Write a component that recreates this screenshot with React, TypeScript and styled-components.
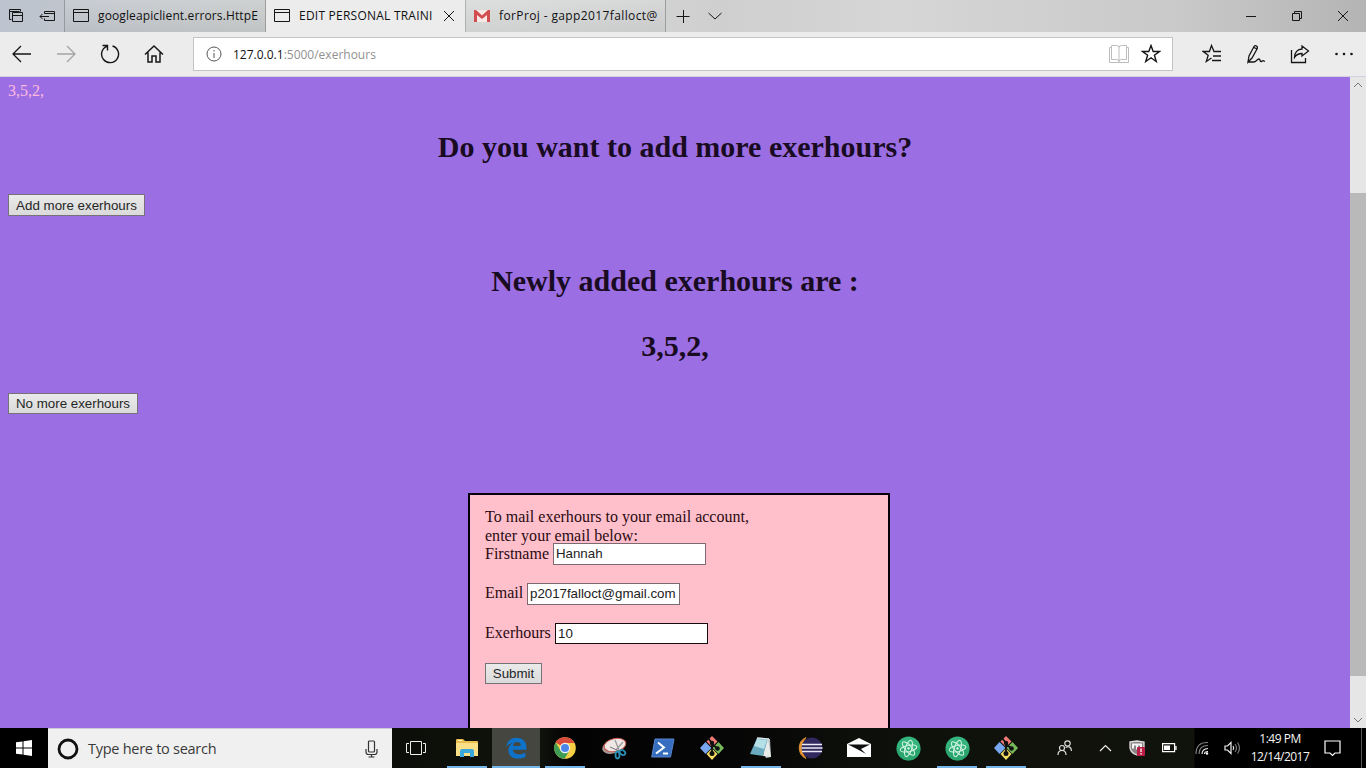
import React from "react";
import styled, { createGlobalStyle } from "styled-components";

const GlobalStyle = createGlobalStyle`
  * { box-sizing: border-box; }
  html, body { margin: 0; padding: 0; overflow: hidden; }
  body { font-family: "Open Sans", "Noto Sans", sans-serif; color: #111; }
  svg { display: block; flex: none; }
`;

const Desktop = styled.div`
  width: 1366px;
  height: 768px;
  display: flex;
  flex-direction: column;
  overflow: hidden;
`;

const TabBar = styled.header`
  height: 32px;
  flex: none;
  display: flex;
  background: linear-gradient(90deg, #bcc3ce 0, #c4c8cc 130px, #c8cbcb 260px, #d8dada 480px, #cfcfcf 720px, #d6d6d6 900px, #c9c9c9 1180px, #b4b4b4 1366px);
`;

const TabTools = styled.div`
  width: 65px;
  display: flex;
  align-items: center;
  padding-left: 8px;
  gap: 15px;
  border-right: 1px solid #98999c;
`;

const Tab = styled.div<{ $active?: boolean; $width: number }>`
  width: ${(p) => p.$width}px;
  height: 32px;
  display: flex;
  align-items: center;
  padding-left: 8px;
  border-right: 1px solid ${(p) => (p.$active ? "#aeb0b0" : "#9b9c9e")};
  background: ${(p) => (p.$active ? "#ececed" : "linear-gradient(rgba(255,255,255,.12), rgba(0,0,0,.035))")};
`;

const TabTitle = styled.span<{ $width: number; $spacing: number }>`
  width: ${(p) => p.$width}px;
  margin-left: 9px;
  white-space: nowrap;
  font-size: 12px;
  line-height: 20px;
  letter-spacing: ${(p) => p.$spacing}px;
`;

const TabClose = styled.div`
  margin-left: 9px;
`;

const TabActions = styled.div`
  display: flex;
  align-items: center;
  gap: 18px;
  padding-left: 10px;
`;

const WindowControls = styled.div`
  margin-left: auto;
  display: flex;
`;

const Control = styled.div<{ $width: number }>`
  width: ${(p) => p.$width}px;
  height: 100%;
  flex: none;
  display: flex;
  align-items: center;
  justify-content: center;
`;

const NavBar = styled.nav`
  height: 45px;
  flex: none;
  display: flex;
  align-items: center;
  background: #ececed;
  border-bottom: 1px solid #d5d1de;
`;

const NavGroup = styled.div<{ $pad?: number }>`
  display: flex;
  flex: none;
  height: 44px;
  padding-left: ${(p) => p.$pad ?? 0}px;
`;

const AddressBar = styled.div`
  width: 980px;
  flex: none;
  height: 34px;
  margin-left: 17px;
  display: flex;
  align-items: center;
  padding: 0 11px 0 12px;
  background: #fff;
  border: 1px solid #c4c4c8;
`;

const Url = styled.span`
  flex: 1;
  margin-left: 11px;
  font-size: 12px;
  letter-spacing: 0;
  color: #919191;
  b { font-weight: 400; color: #111; }
`;

const AddressIcons = styled.div`
  display: flex;
  align-items: center;
  gap: 12px;
`;

const Viewport = styled.main`
  height: 651px;
  flex: none;
  display: flex;
  overflow: hidden;
`;

const Page = styled.div`
  width: 1350px;
  padding: 5px 8px 0;
  background: #9b6fe3;
  font-family: "Liberation Serif", serif;
  overflow: hidden;
`;

const Summary = styled.div`
  font-size: 16px;
  line-height: 18px;
  color: #ffb9df;
`;

const Heading = styled.h1<{ $top: number }>`
  margin: ${(p) => p.$top}px 0 30px;
  font-size: 30px;
  line-height: 34px;
  font-weight: 700;
  text-align: center;
  color: #190b22;
`;

const Button = styled.button<{ $width: number; $height?: number }>`
  display: block;
  width: ${(p) => p.$width}px;
  height: ${(p) => p.$height ?? 21}px;
  padding: ${(p) => (p.$height ? 1 : 0)}px 0 0;
  border: 1px solid #77727a;
  border-radius: 0;
  background: linear-gradient(#e9eae9, #d9dad9);
  font-family: "Liberation Sans", sans-serif;
  font-size: 13.33px;
  line-height: 18px;
  white-space: nowrap;
  color: #262626;
`;

const MailCard = styled.form`
  width: 422px;
  height: 260px;
  margin: 79px 0 0 460px;
  padding: 12px 15px;
  border: 2px solid #080008;
  background: #ffbfcb;
  color: #2a0b12;
  font-size: 16px;
`;

const Intro = styled.p`
  margin: 0;
  height: 36px;
  line-height: 19px;
  letter-spacing: 0.02px;
`;

const Field = styled.div<{ $line?: number }>`
  height: 22px;
  margin-bottom: 18px;
  display: flex;
  align-items: flex-start;
  line-height: ${(p) => p.$line ?? 20}px;
`;

const FieldLabel = styled.label<{ $width: number }>`
  width: ${(p) => p.$width}px;
`;

const TextBox = styled.input<{ $focus?: boolean }>`
  width: 153px;
  height: ${(p) => (p.$focus ? 21 : 22)}px;
  padding: 0 2px 1px;
  border: 1px solid ${(p) => (p.$focus ? "#160b10" : "#7d6a70")};
  border-radius: 0;
  outline: none;
  background: #fff;
  font-family: "Liberation Sans", sans-serif;
  font-size: 13.33px;
  letter-spacing: -0.03px;
  color: #222;
`;

const Scrollbar = styled.aside`
  width: 16px;
  display: flex;
  flex-direction: column;
  align-items: center;
  background: #e6e6e6;
  padding: 5px 0;
`;

const ScrollThumb = styled.div`
  width: 16px;
  height: 483px;
  margin: 105px 0 auto;
  background: #b9b9b9;
`;

const Taskbar = styled.footer`
  height: 40px;
  flex: none;
  display: flex;
  background: linear-gradient(90deg, #000 0, #000 48px, #0c0e09 392px, #10120c 540px, #030303 570px, #050505 720px, #0d0f0b 850px, #10120b 1030px, #10120c 1194px, #000 1195px);
`;

const Start = styled.div`
  width: 48px;
  display: flex;
  align-items: center;
  justify-content: center;
  background: #000;
`;

const Search = styled.div`
  width: 344px;
  display: flex;
  align-items: center;
  padding: 0 14px 0 9px;
  background: #f0f0f0;
  border-top: 1px solid #cfc8d8;
`;

const SearchText = styled.span`
  flex: 1;
  margin-left: 9px;
  font-size: 14.5px;
  letter-spacing: -0.27px;
  color: #3a3a3a;
`;

const TaskView = styled.div`
  width: 51px;
  display: flex;
  align-items: center;
  padding-left: 14px;
`;

const AppButton = styled.div<{ $active?: boolean; $open?: boolean }>`
  width: 48px;
  height: 40px;
  margin-right: 1px;
  display: flex;
  align-items: center;
  justify-content: center;
  background:
    linear-gradient(#76b5e8, #76b5e8) center bottom / ${(p) => (p.$active ? "48px" : p.$open ? "40px" : "0")} 2px no-repeat,
    ${(p) => (p.$active ? "#454640" : "transparent")};
`;

const Tray = styled.div`
  flex: 1;
  display: flex;
  padding-left: 10px;
`;

const Clock = styled.div`
  width: 66px;
  display: flex;
  flex-direction: column;
  align-items: center;
  padding-top: 2px;
  color: #f5f5f5;
  font-size: 12px;
  line-height: 18px;
  letter-spacing: -0.5px;
  white-space: nowrap;
`;

const ShowDesktop = styled.div`
  width: 5px;
  margin-left: auto;
  border-left: 1px solid #555;
`;

type IconProps = { w: number; h: number; color?: string; stroke?: number; children: React.ReactNode };

const Icon = ({ w, h, color = "#161616", stroke = 1, children }: IconProps) => (
  <svg width={w} height={h} viewBox={`0 0 ${w} ${h}`} fill="none" stroke={color} strokeWidth={stroke}>
    {children}
  </svg>
);

const WindowIcon = () => (
  <Icon w={16} h={14}>
    <path d="M.5.5h15v12H.5zM.5 3.5h15" />
  </Icon>
);

const AtomIcon = () => (
  <Icon w={25} h={25} color="#d6f5e6" stroke={1}>
    <circle cx="12.5" cy="12.5" r="12" fill="#35b57d" stroke="none" />
    <path d="M.5 12.5a12 12 0 0 0 24 0z" fill="#219763" stroke="none" opacity=".55" />
    <ellipse cx="12.5" cy="12.5" rx="8.5" ry="3.2" transform="rotate(-12 12.5 12.5)" />
    <ellipse cx="12.5" cy="12.5" rx="8.5" ry="3.2" transform="rotate(48 12.5 12.5)" />
    <ellipse cx="12.5" cy="12.5" rx="8.5" ry="3.2" transform="rotate(108 12.5 12.5)" />
    <circle cx="12.5" cy="12.5" r="1.2" fill="#d6f5e6" stroke="none" />
  </Icon>
);

const GitIcon = () => (
  <Icon w={26} h={26} color="#111" stroke={1.8}>
    <g stroke="none">
      <path d="M13 1l5.500 5.500L13 12 7.500 6.500z" fill="#ef7a76" />
      <path d="M19.500 7l5.500 6-5.500 6-6-6z" fill="#77b95a" />
      <path d="M6.500 7l6 6-6 6L1 13z" fill="#78a7ef" />
      <path d="M13 13.500l5.500 5.500L13 25l-5.500-6z" fill="#f5dd64" />
    </g>
    <path d="M9 3l4 5v10M13 9l6 5" />
    <g fill="#111" stroke="none">
      <circle cx="13" cy="8" r="2.200" />
      <circle cx="13" cy="18.500" r="2.500" />
      <circle cx="18.500" cy="13.500" r="2.300" />
    </g>
  </Icon>
);

const ExplorerIcon = () => (
  <Icon w={22} h={20} color="none">
    <path d="M0 2q0-1 1-1h6l2 2h12q1 0 1 1v14H0z" fill="#e9bd50" />
    <path d="M0 5h22v13H0z" fill="#fbdf86" />
    <path d="M2 2h4v1H2z" fill="#fff2bd" />
    <path d="M4 19v-6q0-2 2-2h10q2 0 2 2v6h-4v-4H8v4z" fill="#3aa7dd" />
  </Icon>
);

const EdgeIcon = () => (
  <Icon w={21} h={22} color="none">
    <path d="M.3 10C.8 4.500 4.500.700 10.400.700 16.800.700 20.400 4.700 20.400 10.300v2.500H6.900c.2 3.300 3 4.500 6 4.500 2.400 0 4.500-.7 6.500-1.900v4.500c-2.200 1.200-4.800 1.700-7.600 1.700-5.800 0-9.400-3.300-9.400-8.300 0-3.300 1.700-6 4.800-7.500C4 6.500 1.800 7.700.3 10zM7 9h7.700c0-2.700-1.300-4.100-3.600-4.100C8.700 4.900 7.300 6.600 7 9z" fill="#0e72c8" />
  </Icon>
);

const ChromeIcon = () => (
  <Icon w={22} h={22} color="none">
    <circle cx="11" cy="11" r="10.800" fill="#f5ce44" />
    <path d="M11 11L1.600 5.600A10.800 10.800 0 0 1 20.500 6H11z" fill="#d94b3d" />
    <path d="M1.600 5.600A10.800 10.800 0 0 0 10.500 21.800L15.500 13.500 11 11 6.500 13.500z" fill="#3f9c55" />
    <circle cx="11" cy="11" r="5.200" fill="#f4f4f4" />
    <circle cx="11" cy="11" r="4" fill="#4c87e8" />
  </Icon>
);

const SnipIcon = () => (
  <Icon w={25} h={23} color="none">
    <ellipse cx="10" cy="10" rx="10" ry="6.500" transform="rotate(-18 10 10)" fill="#a89795" />
    <ellipse cx="13" cy="8" rx="11" ry="6.500" transform="rotate(-12 13 8)" fill="#eee7e5" stroke="#ca5752" />
    <path d="M13 3l4 10M21 5l-7 8" stroke="#999" strokeWidth="1.300" />
    <path d="M8 10l9 4" stroke="#777" />
    <ellipse cx="15.500" cy="18" rx="2" ry="3.500" stroke="#2c90b8" strokeWidth="1.800" />
    <ellipse cx="20.500" cy="15.500" rx="3" ry="2.200" transform="rotate(35 20.500 15.500)" stroke="#2c90b8" strokeWidth="1.800" />
  </Icon>
);

const PowerShellIcon = () => (
  <Icon w={24} h={20} color="#fff" stroke={2}>
    <path d="M4 1h19l-3.500 18H.7z" fill="#376dbf" stroke="#5686d0" strokeWidth="1" />
    <path d="M7 4.500l6 5-8 6M12 15.500h5" />
  </Icon>
);

const NotepadIcon = () => (
  <Icon w={24} h={22} color="none">
    <path d="M8 1l13 1 1 18-5 1z" fill="#b8c1c4" />
    <path d="M8 1l11 1-5 17L1 17z" fill="#6aabbf" />
    <path d="M8 2l10 1-3 9-10-3z" fill="#b5e0e8" />
    <path d="M19 2l3 18-8-1z" fill="#e7ecea" />
    <path d="M8 1l12 1" stroke="#d9e4e5" strokeWidth="1.500" />
  </Icon>
);

const EclipseIcon = () => (
  <Icon w={25} h={22} color="none">
    <path d="M8 .5A11.500 11.500 0 0 0 8 21.500Q0 11 8 .5z" fill="#e89534" stroke="#e89534" strokeWidth=".8" />
    <circle cx="14" cy="11" r="10.500" fill="#30285e" />
    <path d="M4 7.500h20M3.500 11h21M4 14.500h20" stroke="#eceaf5" strokeWidth="1.700" />
  </Icon>
);

const MailIcon = () => (
  <Icon w={24} h={20} color="none">
    <path d="M0 6l12-6 12 6v13H0z" fill="#fff" />
    <path d="M1 6.500h22L14 11l5 5-9-5z" fill="#111" />
  </Icon>
);

const apps: { name: string; icon: React.ReactNode; open?: boolean; active?: boolean }[] = [
  { name: "explorer", icon: <ExplorerIcon />, open: true },
  { name: "edge", icon: <EdgeIcon />, active: true },
  { name: "chrome", icon: <ChromeIcon />, open: true },
  { name: "snip", icon: <SnipIcon /> },
  { name: "powershell", icon: <PowerShellIcon /> },
  { name: "git", icon: <GitIcon /> },
  { name: "notepad", icon: <NotepadIcon />, open: true },
  { name: "eclipse", icon: <EclipseIcon /> },
  { name: "mail", icon: <MailIcon /> },
  { name: "atom", icon: <AtomIcon /> },
  { name: "atom-window", icon: <AtomIcon />, open: true },
  { name: "git-window", icon: <GitIcon />, open: true },
];

const BrowserTabs = () => (
  <TabBar>
    <TabTools>
      <Icon w={16} h={16}>
        <path d="M3.500 11.500h-2v-10h11v2M1.500 3.500h10M4.500 4.500h10v9h-10zM4.500 7.500h10" />
      </Icon>
      <Icon w={17} h={12}>
        <path d="M5.500 3.500v-2h10v9h-10v-2M5.500 3.500h10M1 6.500h9M3.500 4L1 6.500 3.500 9" />
      </Icon>
    </TabTools>
    <Tab $width={201}>
      <WindowIcon />
      <TabTitle $width={159} $spacing={0.12}>googleapiclient.errors.HttpE</TabTitle>
    </Tab>
    <Tab $width={200} $active>
      <WindowIcon />
      <TabTitle $width={135} $spacing={0.23}>EDIT PERSONAL TRAINI</TabTitle>
      <TabClose>
        <Icon w={12} h={12}><path d="M1 1l10 10M11 1L1 11" /></Icon>
      </TabClose>
    </Tab>
    <Tab $width={200}>
      <Icon w={16} h={12} color="none">
        <path d="M0 0h16v12H0z" fill="#f5e8e5" />
        <path d="M0 12V0h2l6 5.500L14 0h2v12h-3V5L8 9 3 5v7z" fill="#d24d50" />
      </Icon>
      <TabTitle $width={157} $spacing={0.38}>forProj - gapp2017falloct@</TabTitle>
    </Tab>
    <TabActions>
      <Icon w={14} h={14}><path d="M.5 7.500h13M7.500 1v13" /></Icon>
      <Icon w={14} h={8}><path d="M.5 1l6.500 6 6.500-6" /></Icon>
    </TabActions>
    <WindowControls>
      <Control $width={46}><Icon w={10} h={3}><path d="M0 1.500h10" /></Icon></Control>
      <Control $width={46}>
        <Icon w={10} h={10}><path d="M.5 2.500h7v7h-7zM2.500 2.500v-2h7v7h-2" /></Icon>
      </Control>
      <Control $width={46}><Icon w={12} h={12}><path d="M1 1l10 10M11 1L1 11" /></Icon></Control>
    </WindowControls>
  </TabBar>
);

const Navigation = () => (
  <NavBar>
    <NavGroup>
      <Control $width={44}><Icon w={20} h={18} stroke={1.3}><path d="M19 9H1M9 1L1 9l8 8" /></Icon></Control>
      <Control $width={44}><Icon w={20} h={18} color="#a4a4a6" stroke={1.3}><path d="M1 9h18M11 1l8 8-8 8" /></Icon></Control>
      <Control $width={44}>
        <Icon w={20} h={20} stroke={1.4}>
          <path d="M12.500 2a8.500 8.500 0 1 1-5.700.3M2.500 1.500h5v5" />
        </Icon>
      </Control>
      <Control $width={44}>
        <Icon w={20} h={20} stroke={1.5}><path d="M1 10.500L10 2l9 8.500M4 8.500V18h4v-6h4v6h4V8.500" /></Icon>
      </Control>
    </NavGroup>
    <AddressBar>
      <Icon w={16} h={16} color="#555">
        <circle cx="8" cy="8" r="7" />
        <path d="M8 7v5M8 4v1.500" />
      </Icon>
      <Url><b>127.0.0.1</b>:5000/exerhours</Url>
      <AddressIcons>
        <Icon w={20} h={20} color="#bdbdbd">
          <path d="M2.500 3.500H.5v15h19v-15h-2M2.500 1.500h5q2.500 0 2.500 2 0-2 2.500-2h5v14h-5q-2.500 0-2.500 2 0-2-2.500-2h-5zM10 3.500v14" />
        </Icon>
        <Icon w={20} h={20} stroke={1.4}>
          <path d="M10 1.500l2.200 6h6.200l-5 3.800 1.900 6.200-5.300-3.700-5.300 3.700 1.900-6.200-5-3.800h6.200z" />
        </Icon>
      </AddressIcons>
    </AddressBar>
    <NavGroup $pad={17}>
      <Control $width={44}>
        <Icon w={20} h={20} stroke={1.3}>
          <path d="M19 7.500h-7L9.500 1.500 7.400 7.500H1.200l5 3.800-1.900 6.200L9.500 14M11 12h8M10 16.500h9" />
        </Icon>
      </Control>
      <Control $width={44}>
        <Icon w={20} h={20} stroke={1.300}>
          <path d="M2 18l1-6L8 2.500Q9 1 10.500 2t.5 3L6 14zM8 3.500l3 1.500M2 18h6c2 0 3-3 5-3 1.500 0 .5 2.500 2 2.500 1 0 2-1.500 3-.5l1 .5" />
        </Icon>
      </Control>
      <Control $width={43}>
        <Icon w={20} h={20} stroke={1.300}>
          <path d="M1.500 6v12.500h14V14M12 2l6.500 5-6.500 5V9.500c-4 0-6 1.500-7.500 4 0-5 3-8.500 7.500-8.500z" />
        </Icon>
      </Control>
      <Control $width={45}>
        <Icon w={18} h={4} color="none">
          <g fill="#161616"><circle cx="1.500" cy="2" r="1.300" /><circle cx="9" cy="2" r="1.300" /><circle cx="16.500" cy="2" r="1.300" /></g>
        </Icon>
      </Control>
    </NavGroup>
  </NavBar>
);

const ExerhoursPage = () => (
  <Viewport>
    <Page>
      <Summary>3,5,2,</Summary>
      <Heading $top={30}>Do you want to add more exerhours?</Heading>
      <Button $width={137} $height={22}>Add more exerhours</Button>
      <Heading $top={48}>Newly added exerhours are :</Heading>
      <Heading $top={31}>3,5,2,</Heading>
      <Button $width={130}>No more exerhours</Button>
      <MailCard>
        <Intro>To mail exerhours to your email account,<br />enter your email below:</Intro>
        <Field $line={22}><FieldLabel $width={68}>Firstname</FieldLabel><TextBox readOnly value="Hannah" /></Field>
        <Field><FieldLabel $width={42}>Email</FieldLabel><TextBox readOnly value="p2017falloct@gmail.com" /></Field>
        <Field><FieldLabel $width={70}>Exerhours</FieldLabel><TextBox $focus readOnly value="10" /></Field>
        <Button type="button" $width={57}>Submit</Button>
      </MailCard>
    </Page>
    <Scrollbar>
      <Icon w={10} h={6} color="#777"><path d="M1 5l4-4 4 4" /></Icon>
      <ScrollThumb />
      <Icon w={10} h={6} color="#777"><path d="M1 1l4 4 4-4" /></Icon>
    </Scrollbar>
  </Viewport>
);

const SystemTaskbar = () => (
  <Taskbar>
    <Start>
      <Icon w={16} h={16} color="none">
        <path d="M0 2.300L6.500 1.400v6.100H0zM7.500 1.200L16 0v7.500H7.500zM0 8.500h6.500v6.100L0 13.700zM7.500 8.500H16V16l-8.500-1.200z" fill="#fff" />
      </Icon>
    </Start>
    <Search>
      <Icon w={22} h={22} color="#111" stroke={2.8}><circle cx="11" cy="11" r="9" /></Icon>
      <SearchText>Type here to search</SearchText>
      <Icon w={13} h={18} color="#333" stroke={1.200}>
        <rect x="3.500" y="1" width="6" height="11" rx="1" />
        <path d="M1 9v3q0 2.500 2.500 2.500h6Q12 14.500 12 12V9M6.500 14.500V17M3.500 17h6" />
      </Icon>
    </Search>
    <TaskView>
      <Icon w={20} h={14} color="#eee"><path d="M4.500.5h11v13h-11zM3 2.500H.5v9H3M17 2.500h2.500v9H17" /></Icon>
    </TaskView>
    {apps.map((app) => (
      <AppButton key={app.name} $open={app.open} $active={app.active}>{app.icon}</AppButton>
    ))}
    <Tray>
      <Control $width={48}>
        <Icon w={16} h={16} color="#ddd" stroke={1.200}>
          <circle cx="10.500" cy="3.500" r="2.700" /><circle cx="5" cy="8" r="2.500" />
          <path d="M1 15q0-4.500 4-4.500T9 15M8.500 7.500q5.500-2.500 6 3.500" />
        </Icon>
      </Control>
      <Control $width={32}><Icon w={13} h={8} color="#eee" stroke={1.200}><path d="M1 7l5.500-5.500L12 7" /></Icon></Control>
      <Control $width={32}>
        <Icon w={17} h={17} color="none">
          <path d="M1 2l7-1 7 1v6q-1 5-7 7-6-2-7-7z" fill="#8b8286" stroke="#ddd" strokeWidth="1.300" />
          <path d="M3 3.500h10v5h-2V5.500H9v4H7v-4H5v3H3z" fill="#f4f4f4" />
          <rect x="8" y="7" width="8" height="9" rx="1" fill="#b91d43" />
          <path d="M12 8.500v3.500M12 13v1.500" stroke="#fff" strokeWidth="1.300" />
        </Icon>
      </Control>
      <Control $width={33}>
        <Icon w={15} h={10} color="#fff" stroke={1.200}>
          <path d="M.6.600h12v8H.6zM14 3v4" /><path d="M2 2.500h6v4.500H2z" fill="#fff" stroke="none" />
        </Icon>
      </Control>
      <Control $width={32}>
        <Icon w={14} h={14} color="#aaa" stroke={1.200}>
          <path d="M1 13Q1 1 13 1.500M4 13Q4 4.500 13 4.500" opacity=".75" />
          <path d="M7 13q0-5 6-5.500M9.500 13q0-2.500 3.500-2.500" stroke="#eee" />
          <circle cx="12" cy="12.500" r="1.200" fill="#fff" stroke="none" />
        </Icon>
      </Control>
      <Control $width={29}>
        <Icon w={17} h={14} color="#eee" stroke={1.200}>
          <path d="M1 5h2.500L7 1.500v11L3.500 9H1zM9 5q1.500 2 0 4" />
          <path d="M11 3q3 4 0 8M13.500 1.500q4 5.500 0 11" stroke="#777" />
        </Icon>
      </Control>
      <Clock><span>1:49 PM</span><span>12/14/2017</span></Clock>
      <Control $width={38}>
        <Icon w={17} h={17} color="#fff" stroke={1.200}><path d="M1 1h15v12h-5l-2.500 2.500L6 13H1z" /></Icon>
      </Control>
      <ShowDesktop />
    </Tray>
  </Taskbar>
);

export default function App() {
  return (
    <>
      <GlobalStyle />
      <Desktop>
        <BrowserTabs />
        <Navigation />
        <ExerhoursPage />
        <SystemTaskbar />
      </Desktop>
    </>
  );
}
